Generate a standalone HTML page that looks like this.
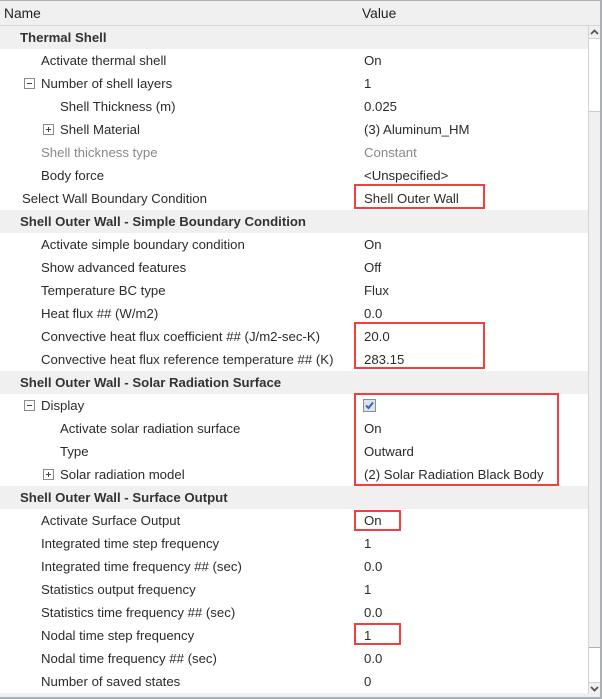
<!DOCTYPE html>
<html><head><meta charset="utf-8">
<style>
html,body{margin:0;padding:0}
body{width:602px;height:699px;position:relative;overflow:hidden;background:#fff;font-family:"Liberation Sans",sans-serif;font-size:13.2px;color:#2b2b2b}
.hdr{position:absolute;left:0;top:0;width:600px;height:25px;background:#f0f0f0;border-bottom:1px solid #d5d5d5}
.hdr span{position:absolute;top:6px;font-size:13.8px;color:#222}
.row{position:absolute;left:0;width:588px;height:23px;line-height:23px;white-space:nowrap}
.sec{background:#f0f0f0;font-weight:bold;color:#333}
.row .n{position:absolute}
.row .v{position:absolute;left:364px}
.g{color:#888}
.box{position:absolute;width:9px;height:9px;border:1px solid #8a8a8a;top:6px;background:#fff}
.box:before{content:"";position:absolute;left:2px;top:4px;width:5px;height:1px;background:#444}
.box.p:after{content:"";position:absolute;left:4px;top:2px;width:1px;height:5px;background:#444}
.red{position:absolute;border:2px solid #f23f3f;box-sizing:border-box}
.sb{position:absolute;left:588px;top:26px;width:12px;height:669px;background:#fff;border-left:1px solid #d0d4d8}
.outer{position:absolute;left:600px;top:0;width:2px;height:699px;background:#a9b0b8}
.outerb{position:absolute;left:0;top:697px;width:602px;height:2px;background:#a9b0b8}
.outert{position:absolute;left:0;top:0;width:602px;height:1px;background:#a9b0b8}
</style></head><body>
<div class="hdr"><span style="left:4px">Name</span><span style="left:362px">Value</span></div>

<div class="row sec" style="top:26px"><span class="n" style="left:20px">Thermal Shell</span></div>
<div class="row" style="top:49px"><span class="n" style="left:41px">Activate thermal shell</span><span class="v">On</span></div>
<div class="row" style="top:72px"><span class="box" style="left:24px"></span><span class="n" style="left:41px">Number of shell layers</span><span class="v">1</span></div>
<div class="row" style="top:95px"><span class="n" style="left:60px">Shell Thickness (m)</span><span class="v">0.025</span></div>
<div class="row" style="top:118px"><span class="box p" style="left:43px"></span><span class="n" style="left:60px">Shell Material</span><span class="v">(3) Aluminum_HM</span></div>
<div class="row g" style="top:141px"><span class="n" style="left:41px">Shell thickness type</span><span class="v">Constant</span></div>
<div class="row" style="top:164px"><span class="n" style="left:41px">Body force</span><span class="v">&lt;Unspecified&gt;</span></div>
<div class="row" style="top:187px"><span class="n" style="left:22px">Select Wall Boundary Condition</span><span class="v">Shell Outer Wall</span></div>
<div class="row sec" style="top:210px"><span class="n" style="left:20px">Shell Outer Wall - Simple Boundary Condition</span></div>
<div class="row" style="top:233px"><span class="n" style="left:41px">Activate simple boundary condition</span><span class="v">On</span></div>
<div class="row" style="top:256px"><span class="n" style="left:41px">Show advanced features</span><span class="v">Off</span></div>
<div class="row" style="top:279px"><span class="n" style="left:41px">Temperature BC type</span><span class="v">Flux</span></div>
<div class="row" style="top:302px"><span class="n" style="left:41px">Heat flux ## (W/m2)</span><span class="v">0.0</span></div>
<div class="row" style="top:325px"><span class="n" style="left:41px">Convective heat flux coefficient ## (J/m2-sec-K)</span><span class="v">20.0</span></div>
<div class="row" style="top:348px"><span class="n" style="left:41px">Convective heat flux reference temperature ## (K)</span><span class="v">283.15</span></div>
<div class="row sec" style="top:371px"><span class="n" style="left:20px">Shell Outer Wall - Solar Radiation Surface</span></div>
<div class="row" style="top:394px"><span class="box" style="left:24px"></span><span class="n" style="left:41px">Display</span>
<svg style="position:absolute;left:363px;top:5px" width="13" height="13" viewBox="0 0 13 13"><rect x="0.5" y="0.5" width="12" height="12" fill="#dfe3e8" stroke="#8a8f96"/><path d="M3 6.5 L5.5 9 L10 3.5" fill="none" stroke="#2a6db5" stroke-width="2"/></svg></div>
<div class="row" style="top:417px"><span class="n" style="left:60px">Activate solar radiation surface</span><span class="v">On</span></div>
<div class="row" style="top:440px"><span class="n" style="left:60px">Type</span><span class="v">Outward</span></div>
<div class="row" style="top:463px"><span class="box p" style="left:43px"></span><span class="n" style="left:60px">Solar radiation model</span><span class="v">(2) Solar Radiation Black Body</span></div>
<div class="row sec" style="top:486px"><span class="n" style="left:20px">Shell Outer Wall - Surface Output</span></div>
<div class="row" style="top:509px"><span class="n" style="left:41px">Activate Surface Output</span><span class="v">On</span></div>
<div class="row" style="top:532px"><span class="n" style="left:41px">Integrated time step frequency</span><span class="v">1</span></div>
<div class="row" style="top:555px"><span class="n" style="left:41px">Integrated time frequency ## (sec)</span><span class="v">0.0</span></div>
<div class="row" style="top:578px"><span class="n" style="left:41px">Statistics output frequency</span><span class="v">1</span></div>
<div class="row" style="top:601px"><span class="n" style="left:41px">Statistics time frequency ## (sec)</span><span class="v">0.0</span></div>
<div class="row" style="top:624px"><span class="n" style="left:41px">Nodal time step frequency</span><span class="v">1</span></div>
<div class="row" style="top:647px"><span class="n" style="left:41px">Nodal time frequency ## (sec)</span><span class="v">0.0</span></div>
<div class="row" style="top:670px"><span class="n" style="left:41px">Number of saved states</span><span class="v">0</span></div>

<div class="red" style="left:354px;top:184px;width:131px;height:25px"></div>
<div class="red" style="left:354px;top:322px;width:131px;height:47px"></div>
<div class="red" style="left:354px;top:393px;width:205px;height:93px"></div>
<div class="red" style="left:354px;top:510px;width:47px;height:21px"></div>
<div class="red" style="left:354px;top:623px;width:47px;height:22px"></div>

<div class="sb">
  <div style="position:absolute;left:0;top:0;width:11px;height:12px;border-bottom:1px solid #d0d4d8;background:#f0f0f0"></div>
  <svg style="position:absolute;left:1px;top:2px" width="9" height="8" viewBox="0 0 9 8"><path d="M1 6 L4.5 2.5 L8 6" fill="none" stroke="#555" stroke-width="1.8"/></svg>
  <div style="position:absolute;left:0;top:85px;width:11px;height:535px;background:#f0f0f0;border-top:1px solid #c8ccd0;border-bottom:1px solid #a9b0b8"></div>
  <div style="position:absolute;left:0;top:656px;width:11px;height:13px;border-top:1px solid #d0d4d8;background:#f0f0f0"></div>
  <svg style="position:absolute;left:1px;top:659px" width="9" height="8" viewBox="0 0 9 8"><path d="M1 2 L4.5 5.5 L8 2" fill="none" stroke="#555" stroke-width="1.8"/></svg>
</div>
<div style="position:absolute;left:0;top:693px;width:600px;height:4px;background:#f0f0f0"></div>
<div class="outer"></div><div class="outerb"></div><div class="outert"></div>
</body></html>
